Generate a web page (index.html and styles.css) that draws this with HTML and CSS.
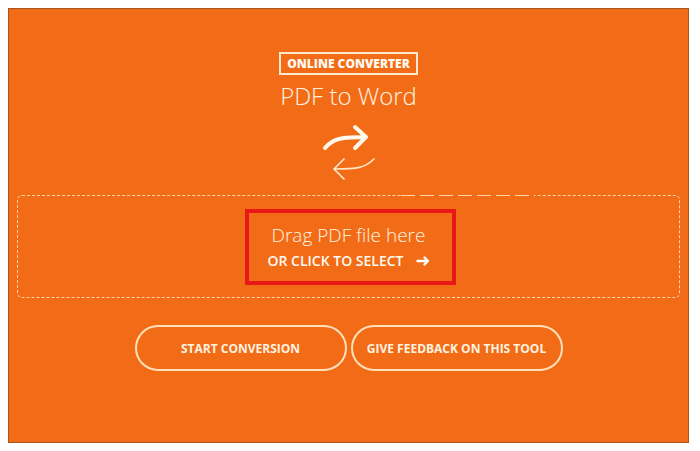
FILE: index.html
```html
<!DOCTYPE html>
<html lang="en">
<head>
<meta charset="utf-8">
<title>PDF to Word</title>
<link rel="stylesheet" href="styles.css">
</head>
<body>
<main class="panel">
  <header class="head">
    <span class="badge">ONLINE CONVERTER</span>
    <h1 class="title">PDF to Word</h1>
    <svg class="swap" width="54" height="58" viewBox="0 0 54 58" fill="none" stroke="#fff8ec" stroke-linecap="round" stroke-linejoin="round" aria-hidden="true">
      <path stroke-width="4" d="M3 26C11 16 21 15 44 15M33 5L44 15L33 26"/>
      <path stroke="#ffe6c4" stroke-width="1.7" d="M52 37C43 46 35 47 12 47M22 37L12 47L22 57"/>
    </svg>
  </header>
  <label class="drop" for="file">
    <input class="file" id="file" type="file" accept="application/pdf">
    <span class="prompt">
      <span class="drag">Drag PDF file here</span>
      <span class="select">OR CLICK TO SELECT
        <svg width="14" height="12" viewBox="0 0 14 12" fill="none" stroke="#fff" stroke-width="2.4" stroke-linejoin="round" stroke-linecap="round" aria-hidden="true"><path d="M1.5 6H11M8.5 2.5L12 6L8.5 9.5"/></svg>
      </span>
    </span>
  </label>
  <div class="actions">
    <button class="btn" type="button">START CONVERSION</button>
    <button class="btn" type="button">GIVE FEEDBACK ON THIS TOOL</button>
  </div>
</main>
</body>
</html>
```
FILE: styles.css
```css
* {
  box-sizing: border-box;
}

body {
  margin: 8px 11px 8px 8px;
  background: #fff;
  color: #fff3e0;
  font-family: "Open Sans", sans-serif;
}

.panel {
  min-height: calc(100vh - 16px);
  padding: 43px 8px 32px;
  border: 1px solid #a8561c;
  background: #f26c17;
}

.head {
  display: flex;
  flex-direction: column;
  align-items: center;
}

.badge {
  padding: 0 6px;
  border: 2px solid #ffe9cc;
  color: #fffaf0;
  font-size: 12px;
  font-weight: 800;
  line-height: 19px;
}

.title {
  margin: 4px 0;
  font-size: 24px;
  font-weight: 300;
  line-height: 34px;
}

.swap {
  margin: 5px 0 15px;
}

.drop {
  position: relative;
  display: flex;
  justify-content: center;
  padding: 13px 12px 12px;
  border: 1px dashed #ffd5a8;
  border-radius: 5px;
  cursor: pointer;
}

/* longer dashes along part of the top edge */
.drop::before {
  content: "";
  position: absolute;
  top: -1px;
  left: 58%;
  width: 20%;
  height: 1px;
  background: repeating-linear-gradient(90deg, #ffd5a8 0 14px, #f26c17 14px 19px);
}

.file {
  position: absolute;
  width: 1px;
  height: 1px;
  opacity: 0;
}

.prompt {
  display: flex;
  flex-direction: column;
  align-items: center;
  margin-left: 4px;
  padding: 8px 22px 8px 18px;
  border: 4px solid #e81818;
}

.drag {
  font-size: 19px;
  font-weight: 300;
  line-height: 28px;
}

.select {
  display: flex;
  align-items: center;
  gap: 12px;
  color: #fffaf0;
  font-size: 14px;
  font-weight: 600;
  line-height: 24px;
}

.actions {
  display: flex;
  flex-wrap: wrap;
  justify-content: center;
  gap: 4px;
  margin-top: 27px;
}

.btn {
  width: 212px;
  height: 46px;
  padding: 0;
  border: 2px solid #ffe0b8;
  border-radius: 23px;
  background: transparent;
  color: #fff3e0;
  font-family: inherit;
  font-size: 12px;
  font-weight: 700;
  cursor: pointer;
}
```
